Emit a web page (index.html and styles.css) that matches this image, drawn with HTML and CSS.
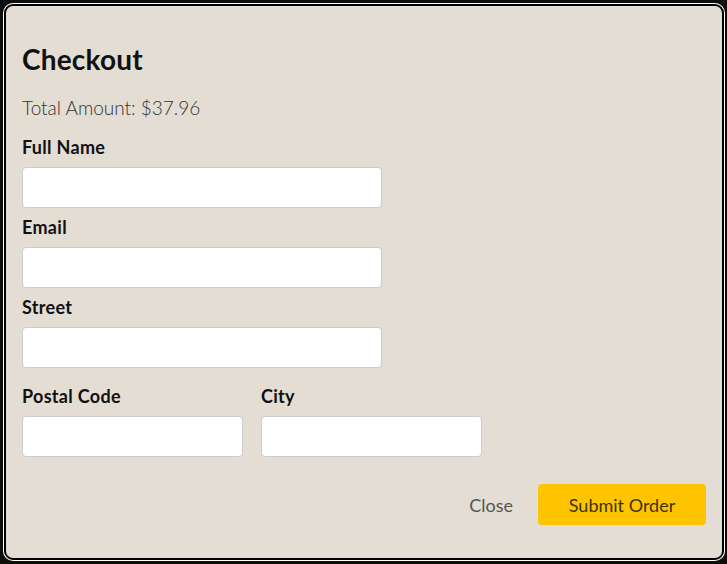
FILE: index.html
```html
<!DOCTYPE html>
<html>
<head>
<meta charset="utf-8">
<link rel="stylesheet" href="styles.css">
</head>
<body>
<div class="backdrop">
  <div class="dialog">
    <h2 class="title">Checkout</h2>
    <p class="total">Total Amount: $37.96</p>
    <form class="form">
      <div class="field">
        <label class="label">Full Name</label>
        <input class="input" type="text">
      </div>
      <div class="field">
        <label class="label">Email</label>
        <input class="input" type="text">
      </div>
      <div class="field">
        <label class="label">Street</label>
        <input class="input" type="text">
      </div>
      <div class="row">
        <div class="field small">
          <label class="label">Postal Code</label>
          <input class="input" type="text">
        </div>
        <div class="field small">
          <label class="label">City</label>
          <input class="input" type="text">
        </div>
      </div>
      <div class="actions">
        <button type="button" class="btn-text">Close</button>
        <button type="button" class="btn-primary">Submit Order</button>
      </div>
    </form>
  </div>
</div>
</body>
</html>
```
FILE: styles.css
```css
* { box-sizing: border-box; }
html, body { margin: 0; height: 100%; }
body {
  background: #0d0d0b;
  font-family: "Lato", "Open Sans", sans-serif;
  color: #111;
}
.backdrop {
  height: 564px;
  padding: 4px 3px 4px 4px;
}
.dialog {
  height: 100%;
  background: #e3ddd4;
  border: 2px solid #000;
  box-shadow: 0 0 0 1px #fff;
  border-radius: 9px;
  padding: 36px 16px 0 16px;
}
.title {
  margin: 0;
  font-size: 28px;
  line-height: 34px;
  font-weight: 700;
  color: #111;
  letter-spacing: 0.2px;
}
.total {
  margin: 20px 0 0 0;
  font-size: 19px;
  line-height: 24px;
  font-weight: 300;
  color: #333;
}
.form { margin-top: 15px; }
.field {
  display: flex;
  flex-direction: column;
  gap: 8px;
  margin-bottom: 7px;
  width: 360px;
}
.label {
  font-size: 18px;
  line-height: 24px;
  font-weight: 700;
  color: #111;
  letter-spacing: 0.3px;
}
.input {
  height: 41px;
  width: 100%;
  border: 1px solid #ccc;
  border-radius: 4px;
  background: #fff;
}
.row {
  display: flex;
  gap: 18px;
  margin-top: 16px;
}
.field.small { width: 221px; }
.actions {
  display: flex;
  justify-content: flex-end;
  align-items: center;
  gap: 25px;
  margin-top: 20px;
}
.btn-text {
  background: none;
  border: none;
  padding: 0;
  font-family: inherit;
  font-size: 18px;
  font-weight: 400;
  color: #555;
}
.btn-primary {
  height: 41px;
  width: 168px;
  background: #ffc400;
  border: none;
  border-radius: 4px;
  font-family: inherit;
  font-size: 18px;
  font-weight: 400;
  color: #3f3300;
}
```
